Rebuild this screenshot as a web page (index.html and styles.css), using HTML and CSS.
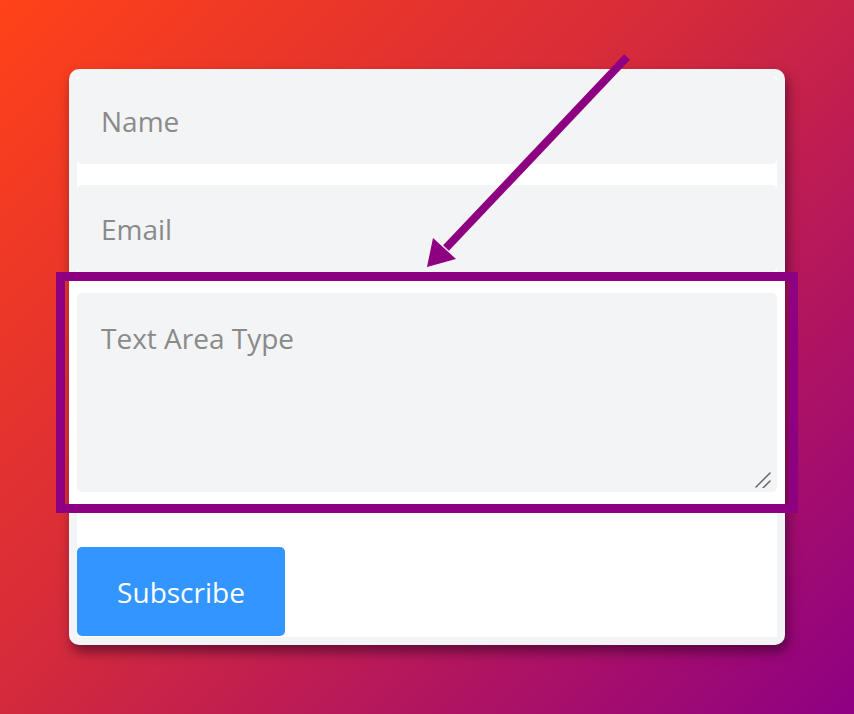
FILE: index.html
```html
<!DOCTYPE html>
<html lang="en">
<head>
<meta charset="utf-8">
<title>Subscribe form</title>
<link rel="stylesheet" href="styles.css">
</head>
<body>
<div class="page">
  <form class="card">
    <div class="inner">
      <input class="field" type="text" placeholder="Name">
      <input class="field field-gap" type="email" placeholder="Email">
      <div class="group highlight">
        <textarea class="field area" placeholder="Text Area Type"></textarea>
        <svg class="grip" width="16" height="16" viewBox="0 0 16 16" aria-hidden="true">
          <line x1="15" y1="1" x2="1" y2="15" stroke="#5f5f5f" stroke-width="1.4" stroke-linecap="round"/>
          <line x1="15" y1="9" x2="8" y2="16" stroke="#5f5f5f" stroke-width="1.4" stroke-linecap="round"/>
        </svg>
      </div>
      <button class="btn" type="button">Subscribe</button>
    </div>
  </form>
  <svg class="arrow" width="854" height="714" viewBox="0 0 854 714" aria-hidden="true">
    <line x1="627" y1="57" x2="446" y2="248" stroke="#8e0082" stroke-width="8"/>
    <polygon points="427,267 433,238 456,259" fill="#8e0082"/>
  </svg>
</div>
</body>
</html>
```
FILE: styles.css
```css
html, body {
  margin: 0;
  padding: 0;
}
body {
  width: 854px;
  height: 714px;
  overflow: hidden;
  background: linear-gradient(135deg, #ff4218 0%, #d42a3c 45%, #8e0084 100%);
  font-family: "Open Sans", "Liberation Sans", sans-serif;
}
.page {
  position: relative;
  width: 854px;
  height: 714px;
  padding: 69px;
  box-sizing: border-box;
}
.card {
  width: 716px;
  margin: 0;
  padding: 8px;
  box-sizing: border-box;
  background: #f3f4f6;
  border-radius: 10px;
  box-shadow: 3px 7px 12px rgba(40, 0, 30, 0.55);
}
.inner {
  background: #fff;
  display: flex;
  flex-direction: column;
  padding-bottom: 1px;
}
.field {
  display: block;
  width: 100%;
  box-sizing: border-box;
  height: 87px;
  border: none;
  outline: none;
  border-radius: 5px;
  background: #f3f4f6;
  padding: 0 24px;
  margin: 0;
  font-family: "Open Sans", "Liberation Sans", sans-serif;
  font-size: 28px;
  color: #333;
}
.field::placeholder {
  color: #8a8a8a;
  opacity: 1;
}
.field-gap {
  margin-top: 21px;
}
.group {
  position: relative;
  margin: 9px -8px 0;
  padding: 12px 8px 13px;
  background: #fff;
}
.highlight::after {
  content: "";
  position: absolute;
  top: -9px;
  bottom: -8px;
  left: -13px;
  right: -13px;
  border: 9px solid #8e0082;
  pointer-events: none;
}
.area {
  height: 199px;
  padding: 26px 24px 24px;
  line-height: 38px;
  resize: none;
}
.grip {
  position: absolute;
  right: 14px;
  bottom: 17px;
  pointer-events: none;
}
.btn {
  margin-top: 42px;
  width: 208px;
  height: 89px;
  border: none;
  border-radius: 5px;
  background: #3395ff;
  color: #fff;
  font-family: "Open Sans", "Liberation Sans", sans-serif;
  font-size: 28px;
  padding: 0;
  cursor: pointer;
}
.arrow {
  position: absolute;
  top: 0;
  left: 0;
  pointer-events: none;
}
```
